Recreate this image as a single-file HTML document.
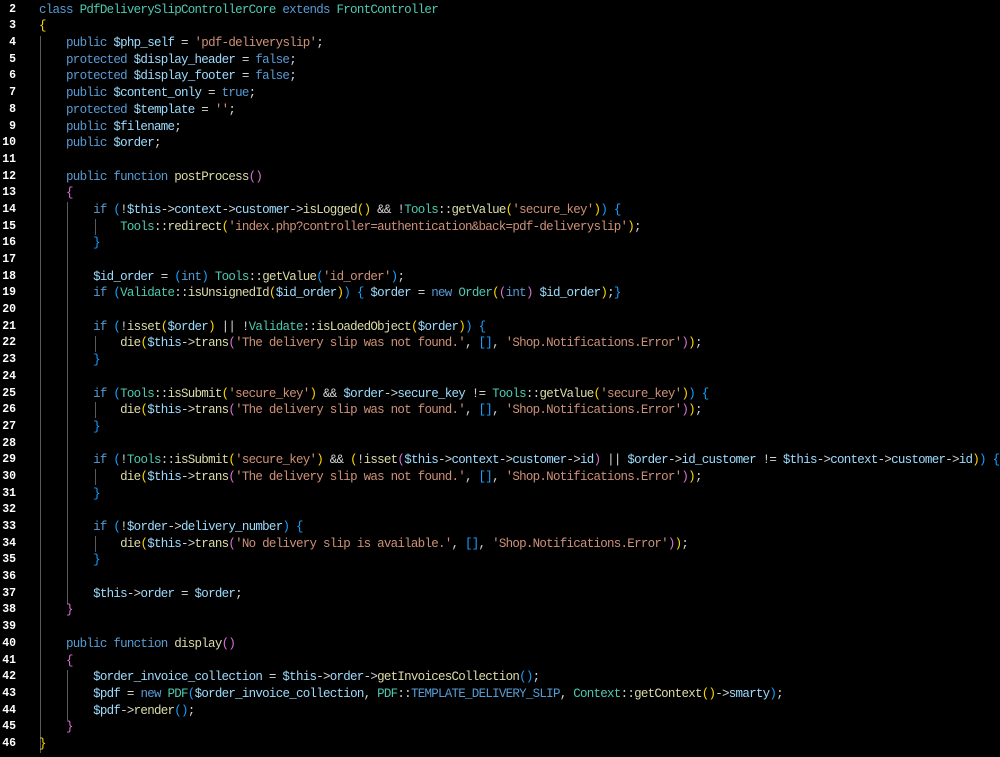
<!DOCTYPE html>
<html><head><meta charset="utf-8"><style>
html,body{margin:0;padding:0;background:#000;width:1000px;height:757px;overflow:hidden}
#ed{position:relative;padding-top:1.7px;font-family:"Liberation Mono",monospace;font-size:12.5px;letter-spacing:-0.74px;line-height:16.7px;color:#d4d4d4}
.l{height:16.7px;white-space:pre;position:relative}
.n{position:absolute;left:0;width:16px;text-align:right;color:#fff;font-weight:bold;letter-spacing:0;font-size:11.5px}
.t{position:absolute;left:39px}
.k{color:#569cd6}.v{color:#9cdcfe}.s{color:#ce9178}.f{color:#dcdcaa}.c{color:#4ec9b0}
.b1{color:#ffd700}.b2{color:#da70d6}.b3{color:#179fff}
.g{position:absolute;width:1px;background:#5a5a5a}
</style></head><body><div id="ed">
<div class="g" style="left:40px;top:36px;height:717px"></div>
<div class="g" style="left:67px;top:202px;height:402px"></div>
<div class="g" style="left:67px;top:670px;height:50px"></div>
<div class="g" style="left:95px;top:219px;height:16px"></div>
<div class="g" style="left:95px;top:336px;height:16px"></div>
<div class="g" style="left:95px;top:402px;height:16px"></div>
<div class="g" style="left:95px;top:469px;height:16px"></div>
<div class="g" style="left:95px;top:536px;height:16px"></div>
<div class="l"><span class="n">2</span><span class="t"><span class="k">class</span> <span class="c">PdfDeliverySlipControllerCore</span> <span class="k">extends</span> <span class="c">FrontController</span></span></div>
<div class="l"><span class="n">3</span><span class="t"><span class="b1">{</span></span></div>
<div class="l"><span class="n">4</span><span class="t">    <span class="k">public</span> <span class="v">$php_self</span> = <span class="s">'pdf-deliveryslip'</span>;</span></div>
<div class="l"><span class="n">5</span><span class="t">    <span class="k">protected</span> <span class="v">$display_header</span> = <span class="k">false</span>;</span></div>
<div class="l"><span class="n">6</span><span class="t">    <span class="k">protected</span> <span class="v">$display_footer</span> = <span class="k">false</span>;</span></div>
<div class="l"><span class="n">7</span><span class="t">    <span class="k">public</span> <span class="v">$content_only</span> = <span class="k">true</span>;</span></div>
<div class="l"><span class="n">8</span><span class="t">    <span class="k">protected</span> <span class="v">$template</span> = <span class="s">''</span>;</span></div>
<div class="l"><span class="n">9</span><span class="t">    <span class="k">public</span> <span class="v">$filename</span>;</span></div>
<div class="l"><span class="n">10</span><span class="t">    <span class="k">public</span> <span class="v">$order</span>;</span></div>
<div class="l"><span class="n">11</span><span class="t"></span></div>
<div class="l"><span class="n">12</span><span class="t">    <span class="k">public</span> <span class="k">function</span> <span class="f">postProcess</span><span class="b2">()</span></span></div>
<div class="l"><span class="n">13</span><span class="t">    <span class="b2">{</span></span></div>
<div class="l"><span class="n">14</span><span class="t">        <span class="k">if</span> <span class="b3">(</span>!<span class="v">$this</span>-&gt;<span class="v">context</span>-&gt;<span class="v">customer</span>-&gt;<span class="f">isLogged</span><span class="b1">()</span> &amp;&amp; !<span class="c">Tools</span>::<span class="f">getValue</span><span class="b1">(</span><span class="s">'secure_key'</span><span class="b1">)</span><span class="b3">)</span> <span class="b3">{</span></span></div>
<div class="l"><span class="n">15</span><span class="t">            <span class="c">Tools</span>::<span class="f">redirect</span><span class="b1">(</span><span class="s">'index.php?controller=authentication&amp;back=pdf-deliveryslip'</span><span class="b1">)</span>;</span></div>
<div class="l"><span class="n">16</span><span class="t">        <span class="b3">}</span></span></div>
<div class="l"><span class="n">17</span><span class="t"></span></div>
<div class="l"><span class="n">18</span><span class="t">        <span class="v">$id_order</span> = <span class="b3">(</span><span class="k">int</span><span class="b3">)</span> <span class="c">Tools</span>::<span class="f">getValue</span><span class="b3">(</span><span class="s">'id_order'</span><span class="b3">)</span>;</span></div>
<div class="l"><span class="n">19</span><span class="t">        <span class="k">if</span> <span class="b3">(</span><span class="c">Validate</span>::<span class="f">isUnsignedId</span><span class="b1">(</span><span class="v">$id_order</span><span class="b1">)</span><span class="b3">)</span> <span class="b3">{</span> <span class="v">$order</span> = <span class="k">new</span> <span class="c">Order</span><span class="b1">(</span><span class="b2">(</span><span class="k">int</span><span class="b2">)</span> <span class="v">$id_order</span><span class="b1">)</span>;<span class="b3">}</span></span></div>
<div class="l"><span class="n">20</span><span class="t"></span></div>
<div class="l"><span class="n">21</span><span class="t">        <span class="k">if</span> <span class="b3">(</span>!<span class="f">isset</span><span class="b1">(</span><span class="v">$order</span><span class="b1">)</span> || !<span class="c">Validate</span>::<span class="f">isLoadedObject</span><span class="b1">(</span><span class="v">$order</span><span class="b1">)</span><span class="b3">)</span> <span class="b3">{</span></span></div>
<div class="l"><span class="n">22</span><span class="t">            <span class="f">die</span><span class="b1">(</span><span class="v">$this</span>-&gt;<span class="f">trans</span><span class="b2">(</span><span class="s">'The delivery slip was not found.'</span>, <span class="b3">[]</span>, <span class="s">'Shop.Notifications.Error'</span><span class="b2">)</span><span class="b1">)</span>;</span></div>
<div class="l"><span class="n">23</span><span class="t">        <span class="b3">}</span></span></div>
<div class="l"><span class="n">24</span><span class="t"></span></div>
<div class="l"><span class="n">25</span><span class="t">        <span class="k">if</span> <span class="b3">(</span><span class="c">Tools</span>::<span class="f">isSubmit</span><span class="b1">(</span><span class="s">'secure_key'</span><span class="b1">)</span> &amp;&amp; <span class="v">$order</span>-&gt;<span class="v">secure_key</span> != <span class="c">Tools</span>::<span class="f">getValue</span><span class="b1">(</span><span class="s">'secure_key'</span><span class="b1">)</span><span class="b3">)</span> <span class="b3">{</span></span></div>
<div class="l"><span class="n">26</span><span class="t">            <span class="f">die</span><span class="b1">(</span><span class="v">$this</span>-&gt;<span class="f">trans</span><span class="b2">(</span><span class="s">'The delivery slip was not found.'</span>, <span class="b3">[]</span>, <span class="s">'Shop.Notifications.Error'</span><span class="b2">)</span><span class="b1">)</span>;</span></div>
<div class="l"><span class="n">27</span><span class="t">        <span class="b3">}</span></span></div>
<div class="l"><span class="n">28</span><span class="t"></span></div>
<div class="l"><span class="n">29</span><span class="t">        <span class="k">if</span> <span class="b3">(</span>!<span class="c">Tools</span>::<span class="f">isSubmit</span><span class="b1">(</span><span class="s">'secure_key'</span><span class="b1">)</span> &amp;&amp; <span class="b1">(</span>!<span class="f">isset</span><span class="b2">(</span><span class="v">$this</span>-&gt;<span class="v">context</span>-&gt;<span class="v">customer</span>-&gt;<span class="v">id</span><span class="b2">)</span> || <span class="v">$order</span>-&gt;<span class="v">id_customer</span> != <span class="v">$this</span>-&gt;<span class="v">context</span>-&gt;<span class="v">customer</span>-&gt;<span class="v">id</span><span class="b1">)</span><span class="b3">)</span> <span class="b3">{</span></span></div>
<div class="l"><span class="n">30</span><span class="t">            <span class="f">die</span><span class="b1">(</span><span class="v">$this</span>-&gt;<span class="f">trans</span><span class="b2">(</span><span class="s">'The delivery slip was not found.'</span>, <span class="b3">[]</span>, <span class="s">'Shop.Notifications.Error'</span><span class="b2">)</span><span class="b1">)</span>;</span></div>
<div class="l"><span class="n">31</span><span class="t">        <span class="b3">}</span></span></div>
<div class="l"><span class="n">32</span><span class="t"></span></div>
<div class="l"><span class="n">33</span><span class="t">        <span class="k">if</span> <span class="b3">(</span>!<span class="v">$order</span>-&gt;<span class="v">delivery_number</span><span class="b3">)</span> <span class="b3">{</span></span></div>
<div class="l"><span class="n">34</span><span class="t">            <span class="f">die</span><span class="b1">(</span><span class="v">$this</span>-&gt;<span class="f">trans</span><span class="b2">(</span><span class="s">'No delivery slip is available.'</span>, <span class="b3">[]</span>, <span class="s">'Shop.Notifications.Error'</span><span class="b2">)</span><span class="b1">)</span>;</span></div>
<div class="l"><span class="n">35</span><span class="t">        <span class="b3">}</span></span></div>
<div class="l"><span class="n">36</span><span class="t"></span></div>
<div class="l"><span class="n">37</span><span class="t">        <span class="v">$this</span>-&gt;<span class="v">order</span> = <span class="v">$order</span>;</span></div>
<div class="l"><span class="n">38</span><span class="t">    <span class="b2">}</span></span></div>
<div class="l"><span class="n">39</span><span class="t"></span></div>
<div class="l"><span class="n">40</span><span class="t">    <span class="k">public</span> <span class="k">function</span> <span class="f">display</span><span class="b2">()</span></span></div>
<div class="l"><span class="n">41</span><span class="t">    <span class="b2">{</span></span></div>
<div class="l"><span class="n">42</span><span class="t">        <span class="v">$order_invoice_collection</span> = <span class="v">$this</span>-&gt;<span class="v">order</span>-&gt;<span class="f">getInvoicesCollection</span><span class="b3">()</span>;</span></div>
<div class="l"><span class="n">43</span><span class="t">        <span class="v">$pdf</span> = <span class="k">new</span> <span class="c">PDF</span><span class="b3">(</span><span class="v">$order_invoice_collection</span>, <span class="c">PDF</span>::<span class="k">TEMPLATE_DELIVERY_SLIP</span>, <span class="c">Context</span>::<span class="f">getContext</span><span class="b1">()</span>-&gt;<span class="v">smarty</span><span class="b3">)</span>;</span></div>
<div class="l"><span class="n">44</span><span class="t">        <span class="v">$pdf</span>-&gt;<span class="f">render</span><span class="b3">()</span>;</span></div>
<div class="l"><span class="n">45</span><span class="t">    <span class="b2">}</span></span></div>
<div class="l"><span class="n">46</span><span class="t"><span class="b1">}</span></span></div>
</div></body></html>
